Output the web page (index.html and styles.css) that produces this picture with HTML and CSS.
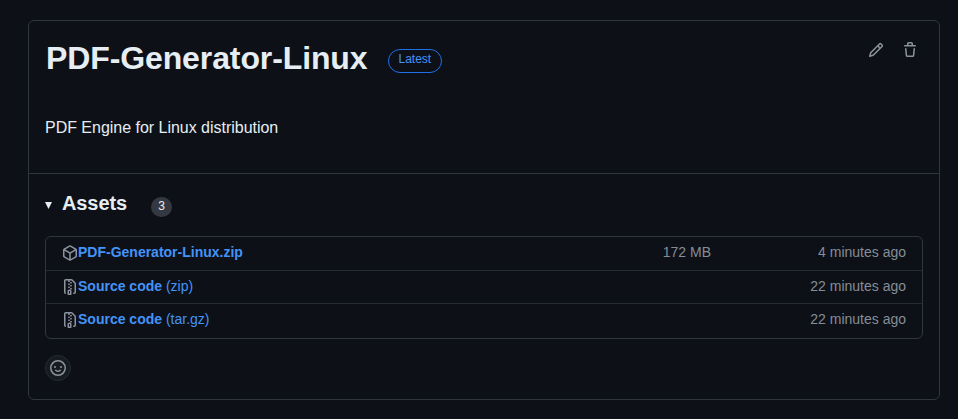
FILE: index.html
```html
<!DOCTYPE html>
<html lang="en">
<head>
<meta charset="utf-8">
<title>PDF-Generator-Linux</title>
<link rel="stylesheet" href="styles.css">
</head>
<body>
<svg class="symbols" width="0" height="0">
  <symbol id="file-zip" viewBox="0 0 16 16"><path d="M3.5 1.75v11.5c0 .09.048.173.126.217a.75.75 0 0 1-.752 1.298A1.748 1.748 0 0 1 2 13.25V1.75C2 .784 2.784 0 3.75 0h5.586c.464 0 .909.185 1.237.513l2.914 2.914c.329.328.513.773.513 1.237v8.586A1.75 1.75 0 0 1 12.25 15h-.5a.75.75 0 0 1 0-1.5h.5a.25.25 0 0 0 .25-.25V4.664a.25.25 0 0 0-.073-.177L9.513 1.573a.25.25 0 0 0-.177-.073H7.25a.75.75 0 0 1 0 1.5h-.5a.75.75 0 0 1 0-1.5h-3a.25.25 0 0 0-.25.25Zm3.75 8.75h.5c.966 0 1.75.784 1.75 1.75v3a.75.75 0 0 1-.75.75h-2.5a.75.75 0 0 1-.75-.75v-3c0-.966.784-1.75 1.75-1.75ZM6 5.25a.75.75 0 0 1 .75-.75h.5a.75.75 0 0 1 0 1.5h-.5A.75.75 0 0 1 6 5.25Zm.75 2.25h.5a.75.75 0 0 1 0 1.5h-.5a.75.75 0 0 1 0-1.5ZM8 6.75A.75.75 0 0 1 8.75 6h.5a.75.75 0 0 1 0 1.5h-.5A.75.75 0 0 1 8 6.75ZM8.75 3h.5a.75.75 0 0 1 0 1.5h-.5a.75.75 0 0 1 0-1.5ZM8 9.75A.75.75 0 0 1 8.75 9h.5a.75.75 0 0 1 0 1.5h-.5A.75.75 0 0 1 8 9.75Zm-1 2.5v2.25h1v-2.25a.25.25 0 0 0-.25-.25h-.5a.25.25 0 0 0-.25.25Z"/></symbol>
</svg>
<main class="release">
  <section class="release-body">
    <header class="release-header">
      <h1 class="release-title">PDF-Generator-Linux</h1>
      <span class="label-latest">Latest</span>
      <div class="actions">
        <svg class="icon" viewBox="0 0 16 16"><path d="M11.013 1.427a1.75 1.75 0 0 1 2.474 0l1.086 1.086a1.75 1.75 0 0 1 0 2.474l-8.61 8.61c-.21.21-.47.364-.756.445l-3.251.93a.75.75 0 0 1-.927-.928l.929-3.25c.081-.286.235-.547.445-.758l8.61-8.61Zm.176 4.823L9.75 4.81l-6.286 6.287a.253.253 0 0 0-.064.108l-.558 1.953 1.953-.558a.253.253 0 0 0 .108-.064Zm1.238-3.763a.25.25 0 0 0-.354 0L10.811 3.75l1.439 1.44 1.263-1.263a.25.25 0 0 0 0-.354Z"/></svg>
        <svg class="icon" viewBox="0 0 16 16"><path d="M11 1.75V3h2.25a.75.75 0 0 1 0 1.5H2.75a.75.75 0 0 1 0-1.5H5V1.75C5 .784 5.784 0 6.75 0h2.5C10.216 0 11 .784 11 1.75ZM4.496 6.675l.66 6.6a.25.25 0 0 0 .249.225h5.19a.25.25 0 0 0 .249-.225l.66-6.6a.75.75 0 0 1 1.492.149l-.66 6.6A1.748 1.748 0 0 1 10.595 15h-5.19a1.75 1.75 0 0 1-1.741-1.575l-.66-6.6a.75.75 0 1 1 1.492-.15ZM6.5 1.75V3h3V1.75a.25.25 0 0 0-.25-.25h-2.5a.25.25 0 0 0-.25.25Z"/></svg>
      </div>
    </header>
    <p class="description">PDF Engine for Linux distribution</p>
  </section>
  <section class="release-footer">
    <div class="assets-summary">
      <svg class="caret" viewBox="0 0 7 7"><path d="M0 0h7L3.5 7Z"/></svg>
      <h2 class="assets-title">Assets</h2>
      <span class="counter">3</span>
    </div>
    <ul class="asset-list">
      <li class="asset">
        <svg class="icon" viewBox="0 0 16 16"><path d="m8.878.392 5.25 3.045c.54.314.872.89.872 1.514v6.098a1.75 1.75 0 0 1-.872 1.514l-5.25 3.045a1.75 1.75 0 0 1-1.756 0l-5.25-3.045A1.75 1.75 0 0 1 1 11.049V4.951c0-.624.332-1.201.872-1.514L7.122.392a1.75 1.75 0 0 1 1.756 0ZM7.875 1.69l-4.63 2.685L8 7.133l4.755-2.758-4.63-2.685a.248.248 0 0 0-.25 0ZM2.5 5.677v5.372c0 .09.047.171.125.216l4.625 2.683V8.432Zm6.25 8.271 4.625-2.683a.25.25 0 0 0 .125-.216V5.677L8.75 8.432Z"/></svg>
        <a class="asset-name"><b>PDF-Generator-Linux.zip</b></a>
        <span class="asset-size">172 MB</span>
        <span class="asset-time">4 minutes ago</span>
      </li>
      <li class="asset">
        <svg class="icon"><use href="#file-zip"/></svg>
        <a class="asset-name"><b>Source code</b> (zip)</a>
        <span class="asset-time">22 minutes ago</span>
      </li>
      <li class="asset">
        <svg class="icon"><use href="#file-zip"/></svg>
        <a class="asset-name"><b>Source code</b> (tar.gz)</a>
        <span class="asset-time">22 minutes ago</span>
      </li>
    </ul>
    <div class="reaction">
      <svg class="icon" viewBox="0 0 16 16"><path d="M8 0a8 8 0 1 1 0 16A8 8 0 0 1 8 0ZM1.5 8a6.5 6.5 0 1 0 13 0 6.5 6.5 0 0 0-13 0Zm3.82 1.636a.75.75 0 0 1 1.038.175l.007.009c.103.118.22.222.35.31.264.178.683.37 1.285.37.602 0 1.02-.192 1.285-.371.13-.088.247-.192.35-.31l.007-.008a.75.75 0 0 1 1.222.87l-.022-.015c.02.013.021.015.021.015v.001l-.001.002-.002.003-.005.007-.014.019a2.066 2.066 0 0 1-.184.213c-.16.166-.338.316-.53.445-.63.418-1.37.638-2.127.629-.946 0-1.652-.308-2.126-.63a3.331 3.331 0 0 1-.715-.657l-.014-.02-.005-.006-.002-.003v-.002h-.001l.613-.432-.614.43a.75.75 0 0 1 .183-1.044ZM12 7a1 1 0 1 1-2 0 1 1 0 0 1 2 0ZM5 8a1 1 0 1 1 0-2 1 1 0 0 1 0 2Z"/></svg>
    </div>
  </section>
</main>
</body>
</html>
```
FILE: styles.css
```css
* { box-sizing: border-box; }

body {
  margin: 0;
  padding: 20px 18px 19px 28px;
  height: 419px;
  background: #0d1117;
  color: #e6edf3;
  font: 14px/20px "Liberation Sans", Arial, sans-serif;
}

.symbols { display: block; }

.release {
  height: 380px;
  border: 1px solid #30363d;
  border-radius: 6px;
}

.icon {
  display: block;
  flex: none;
  width: 16px;
  height: 16px;
  fill: #8b949e;
}

.release-body {
  height: 153px;
  padding: 13px 16px 0;
  border-bottom: 1px solid #30363d;
}

.release-header {
  display: flex;
  align-items: flex-start;
}

.release-title {
  margin: 0 0 0 1px;
  font-size: 32px;
  line-height: 48px;
  font-weight: 600;
  letter-spacing: -0.11px;
}

.label-latest {
  margin: 15px 0 0 20px;
  height: 24px;
  padding: 0 10px;
  border: 1px solid #1f6feb;
  border-radius: 24px;
  color: #4493f8;
  font-size: 12px;
  line-height: 18px;
}

.actions {
  display: flex;
  gap: 18px;
  margin: 8px 5px 0 auto;
}

.description {
  margin: 34px 0 0;
  font-size: 16px;
  line-height: 24px;
  letter-spacing: -0.02px;
}

.release-footer { padding: 14px 16px 0; }

.assets-summary {
  display: flex;
  height: 30px;
}

.caret {
  width: 7px;
  height: 7px;
  margin-top: 14px;
  fill: #e6edf3;
}

.assets-title {
  margin: 0 0 0 10px;
  font-size: 20px;
  line-height: 30px;
  font-weight: 600;
  letter-spacing: -0.1px;
}

.counter {
  width: 21px;
  height: 20px;
  margin: 9px 0 0 24px;
  border-radius: 20px;
  background: #343941;
  font-size: 12px;
  line-height: 18px;
  text-align: center;
}

.asset-list {
  margin: 18px 0 0;
  padding: 0;
  list-style: none;
  border: 1px solid #30363d;
  border-radius: 6px;
}

.asset {
  display: flex;
  height: 33px;
  padding: 5px 16px 0;
}

.asset + .asset { border-top: 1px solid #262c33; }
.asset:last-child { height: 35px; }
.asset .icon { margin-top: 3px; }

.asset-name {
  flex: 1;
  color: #4493f8;
}

.asset-size,
.asset-time {
  color: #848d97;
  text-align: right;
}

.asset-time { width: 195px; }

.reaction {
  display: grid;
  place-items: center;
  width: 26px;
  height: 26px;
  margin-top: 16px;
  border: 1px solid #262c33;
  border-radius: 50%;
  background: #161b22;
}
```
